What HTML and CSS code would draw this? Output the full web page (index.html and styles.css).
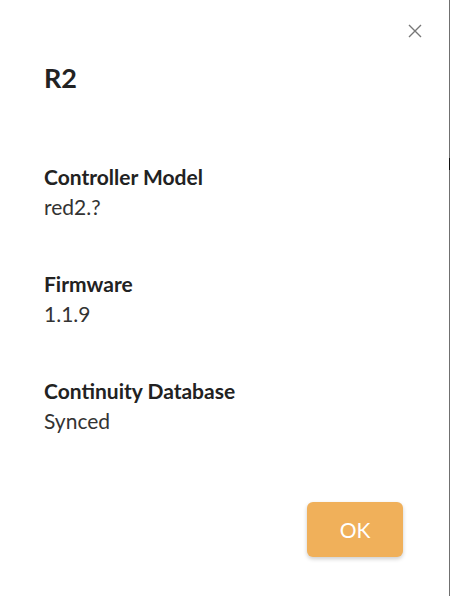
FILE: index.html
```html
<!DOCTYPE html>
<html lang="en">
<head>
    <meta charset="UTF-8">
    <meta name="viewport" content="width=device-width, initial-scale=1.0">
    <title>R2</title>
    <link rel="stylesheet" href="styles.css">
</head>
<body>
    <div class="dialog">
        <button class="close" aria-label="Close">
            <svg width="14" height="14" viewBox="0 0 14 14">
                <path d="M1 1L13 13M13 1L1 13" stroke="#777" stroke-width="1.4" fill="none"/>
            </svg>
        </button>
        <h2 class="title">R2</h2>

        <div class="info">
            <div class="item">
                <div class="label">Controller Model</div>
                <div class="value">red2.?</div>
            </div>
            <div class="item">
                <div class="label">Firmware</div>
                <div class="value">1.1.9</div>
            </div>
            <div class="item">
                <div class="label">Continuity Database</div>
                <div class="value">Synced</div>
            </div>
        </div>

        <div class="actions">
            <button class="ok">OK</button>
        </div>
    </div>
</body>
</html>
```

FILE: styles.css
```css
body {
    margin: 0;
    padding: 0;
    font-family: Lato, "Open Sans", sans-serif;
    background: linear-gradient(to bottom, #707070 158px, #111 158px, #111 170px, #707070 170px);
    min-height: 100vh;
}

.dialog {
    position: relative;
    box-sizing: border-box;
    width: 449px;
    height: 596px;
    background-color: #fff;
    padding: 62px 46px 39px 44px;
    display: flex;
    flex-direction: column;
}

.close {
    position: absolute;
    top: 24px;
    right: 27px;
    width: 14px;
    height: 14px;
    padding: 0;
    border: none;
    background: none;
    cursor: pointer;
    display: flex;
}

.title {
    margin: 0;
    font-size: 27px;
    line-height: 32px;
    font-weight: 700;
    color: #222;
}

.info {
    margin-top: 68px;
    display: flex;
    flex-direction: column;
    gap: 47px;
}

.label {
    font-size: 21px;
    line-height: 30px;
    font-weight: 700;
    color: #222;
}

.value {
    font-size: 21px;
    line-height: 30px;
    color: #333;
}

.actions {
    margin-top: auto;
    display: flex;
    justify-content: flex-end;
}

.ok {
    width: 96px;
    height: 55px;
    border: none;
    border-radius: 6px;
    background-color: #f0b05a;
    color: #fff;
    font-family: Lato, sans-serif;
    font-size: 21px;
    box-shadow: 0 2px 4px rgba(0, 0, 0, 0.2);
    cursor: pointer;
}
```
